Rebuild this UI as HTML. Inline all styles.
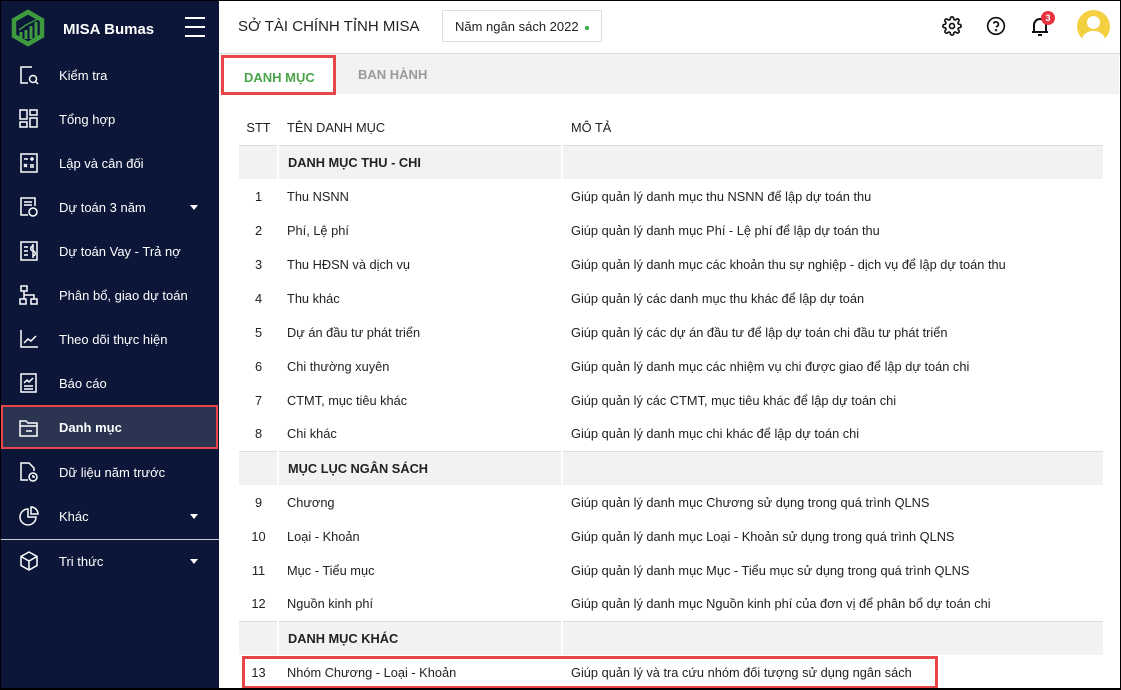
<!DOCTYPE html>
<html><head><meta charset="utf-8"><style>
*{box-sizing:border-box;margin:0;padding:0}
body{width:1121px;height:690px;overflow:hidden;font-family:"Liberation Sans",sans-serif;background:#fff;position:relative}
.frame{position:absolute;left:0;top:0;width:1121px;height:690px;border:1px solid #000;border-bottom-width:2px;pointer-events:none;z-index:10}
.side{position:absolute;left:0;top:0;width:219px;height:690px;background:#0b1638;color:#fff}
.logo{position:absolute;left:9px;top:9px}
.brand{position:absolute;left:63px;top:21px;font-weight:bold;font-size:15px}
.ham{position:absolute;left:185px;top:17px;width:20px}
.ham i{display:block;height:2px;background:#fff;margin-bottom:7px}
.mi{position:absolute;left:0;width:219px;height:44px;font-size:13px;display:flex;align-items:center}
.mi svg{position:absolute;left:19px;top:12px}
.mi span{position:absolute;left:59px}
.mi b.car{position:absolute;left:190px;top:20px;border:4px solid transparent;border-top:5px solid #fff;border-bottom:0}
.act{background:#2b3552;outline:2px solid #e9464a;outline-offset:-2px;left:1px;width:217px;font-weight:bold}
.sep{position:absolute;left:0;top:539px;width:219px;height:1px;background:#c8ccd6}
.hdr{position:absolute;left:219px;top:0;right:0;height:54px;border-bottom:1px solid #ddd}
.title{position:absolute;left:19px;top:18px;font-size:15px;color:#222}
.year{position:absolute;left:223px;top:10px;width:160px;height:32px;border:1px solid #ddd;font-size:13px;color:#222;padding:8px 12px}
.year i{display:inline-block;width:4px;height:4px;border-radius:50%;background:#2eaa3f;margin-left:6px;vertical-align:middle}
.tabs{position:absolute;left:219px;top:54px;right:2px;height:40px;background:#f2f2f2}
.t1{position:absolute;left:2px;top:1px;width:115px;height:40px;background:#fff;border:3px solid #e9464a;color:#4aa54a;font-weight:bold;font-size:13px;padding:12px 0 0 20px}
.t2{position:absolute;left:139px;top:13px;color:#9a9a9a;font-weight:bold;font-size:13px}
table{position:absolute;left:239px;top:110px;width:864px;border-collapse:collapse;font-size:12.8px;color:#222}
td{height:34px;padding:0;white-space:nowrap}
td:nth-child(1){width:39px;text-align:center}
td:nth-child(2){width:284px;padding-left:9px}
td:nth-child(3){padding-left:9px}
tr.h td{height:35px}
tr.g td{background:#f2f2f2;font-weight:bold;border-left:2px solid #fff}
tr.g td:first-child{border-left:0}
tr.g{border-top:1px solid #ddd}
.hl{position:absolute;left:242px;top:656px;width:696px;height:33px;border:3px solid #e9464a}
</style></head><body>
<div class="side">
<svg class="logo" width="38" height="38" viewBox="0 0 38 38"><path d="M19 3 L33 11 V27 L19 35 L5 27 V11 Z" fill="none" stroke="#3f9a3f" stroke-width="4.5"/><path d="M12 30V23M17 30V21M22 30V17M27 30V13" stroke="#3f9a3f" stroke-width="3"/><path d="M10 21 L17 16 L23 13 L29 10" stroke="#3f9a3f" stroke-width="1.5" fill="none"/></svg>
<div class="brand">MISA Bumas</div>
<div class="ham"><i></i><i></i><i></i></div>
<div class="mi" style="top:53px"><svg width="20" height="20" fill="none" stroke="#fff" stroke-width="1.5"><path d="M13 2H2V18H9"/><circle cx="14" cy="14" r="3.5"/><path d="M16.5 16.5L19 19"/></svg><span>Kiểm tra</span></div>
<div class="mi" style="top:97px"><svg width="20" height="20" fill="none" stroke="#fff" stroke-width="1.5"><rect x="1" y="1" width="7" height="9"/><rect x="11" y="1" width="7" height="5"/><rect x="1" y="13" width="7" height="5"/><rect x="11" y="9" width="7" height="9"/></svg><span>Tổng hợp</span></div>
<div class="mi" style="top:141px"><svg width="20" height="20" fill="none" stroke="#fff" stroke-width="1.5"><rect x="2" y="1" width="16" height="18"/><path d="M5 6h4M11 6h4M13 4v4M5 11l3 3M8 11l-3 3M11 12h4M11 14h4"/></svg><span>Lập và cân đối</span></div>
<div class="mi" style="top:185px"><svg width="20" height="20" fill="none" stroke="#fff" stroke-width="1.5"><path d="M9 18H2V1H16V9"/><path d="M5 5h8M5 8h8"/><circle cx="14" cy="15" r="4"/></svg><span>Dự toán 3 năm</span><b class="car"></b></div>
<div class="mi" style="top:229px"><svg width="20" height="20" fill="none" stroke="#fff" stroke-width="1.5"><rect x="2" y="1" width="16" height="18"/><path d="M5 6h4M5 10h4M5 14h4M14 5c-3 0-3 5 0 5s3 5 0 5M14 3v14"/></svg><span>Dự toán Vay - Trả nợ</span></div>
<div class="mi" style="top:273px"><svg width="20" height="20" fill="none" stroke="#fff" stroke-width="1.5"><rect x="2" y="1" width="6" height="5"/><rect x="1" y="14" width="6" height="5"/><rect x="12" y="14" width="6" height="5"/><path d="M5 6v4h10v4M5 10v4"/></svg><span>Phân bổ, giao dự toán</span></div>
<div class="mi" style="top:317px"><svg width="20" height="20" fill="none" stroke="#fff" stroke-width="1.5"><path d="M2 1V18H19M5 14l4-4 3 2 5-5"/></svg><span>Theo dõi thực hiện</span></div>
<div class="mi" style="top:361px"><svg width="20" height="20" fill="none" stroke="#fff" stroke-width="1.5"><rect x="2" y="1" width="15" height="18"/><path d="M5 10l3-3 2 2 4-4M5 13h9M5 16h9"/></svg><span>Báo cáo</span></div>
<div class="mi act" style="top:405px"><svg width="20" height="20" fill="none" stroke="#fff" stroke-width="1.5" style="left:18px;top:13px"><path d="M1 3h6l2 2h9v13H1z M1 8h17M7 13h6"/></svg><span style="left:58px">Danh mục</span></div>
<div class="mi" style="top:450px"><svg width="20" height="20" fill="none" stroke="#fff" stroke-width="1.5"><path d="M9 18H2V1H10L15 6V9"/><circle cx="14" cy="15" r="4"/><path d="M14 13v2h2"/></svg><span>Dữ liệu năm trước</span></div>
<div class="mi" style="top:494px"><svg width="20" height="20" fill="none" stroke="#fff" stroke-width="1.5"><path d="M9 3A8 8 0 1 0 17 11H9Z"/><path d="M12 1A7 7 0 0 1 19 8H12Z"/></svg><span>Khác</span><b class="car"></b></div>
<div class="sep"></div>
<div class="mi" style="top:539px"><svg width="20" height="20" fill="none" stroke="#fff" stroke-width="1.5"><path d="M10 1L18 5.5V14.5L10 19L2 14.5V5.5Z M2 5.5L10 10L18 5.5M10 10V19"/></svg><span>Tri thức</span><b class="car"></b></div>
</div>
<div class="hdr">
<div class="title">SỞ TÀI CHÍNH TỈNH MISA</div>
<div class="year">Năm ngân sách 2022<i></i></div>
<svg style="position:absolute;left:723px;top:16px" width="20" height="20" viewBox="0 0 24 24" fill="none" stroke="#111" stroke-width="2"><circle cx="12" cy="12" r="3"/><path d="M19.4 15a1.7 1.7 0 0 0 .3 1.8l.1.1a2 2 0 1 1-2.8 2.8l-.1-.1a1.7 1.7 0 0 0-1.8-.3 1.7 1.7 0 0 0-1 1.5V21a2 2 0 1 1-4 0v-.1a1.7 1.7 0 0 0-1.1-1.5 1.7 1.7 0 0 0-1.8.3l-.1.1a2 2 0 1 1-2.8-2.8l.1-.1a1.7 1.7 0 0 0 .3-1.8 1.7 1.7 0 0 0-1.5-1H3a2 2 0 1 1 0-4h.1a1.7 1.7 0 0 0 1.5-1.1 1.7 1.7 0 0 0-.3-1.8l-.1-.1a2 2 0 1 1 2.8-2.8l.1.1a1.7 1.7 0 0 0 1.8.3H9a1.7 1.7 0 0 0 1-1.5V3a2 2 0 1 1 4 0v.1a1.7 1.7 0 0 0 1 1.5 1.7 1.7 0 0 0 1.8-.3l.1-.1a2 2 0 1 1 2.8 2.8l-.1.1a1.7 1.7 0 0 0-.3 1.8V9a1.7 1.7 0 0 0 1.5 1H21a2 2 0 1 1 0 4h-.1a1.7 1.7 0 0 0-1.5 1z"/></svg>
<svg style="position:absolute;left:767px;top:16px" width="20" height="20" viewBox="0 0 24 24" fill="none" stroke="#111" stroke-width="2"><circle cx="12" cy="12" r="10"/><path d="M9.1 9a3 3 0 0 1 5.8 1c0 2-3 3-3 3"/><circle cx="12" cy="17" r=".5"/></svg>
<svg style="position:absolute;left:811px;top:16px" width="20" height="21" viewBox="0 0 20 21" fill="none" stroke="#111" stroke-width="2"><path d="M4 16V9a6 6 0 0 1 12 0v7H2h16M8 19h4"/></svg>
<div style="position:absolute;left:822px;top:11px;width:14px;height:14px;border-radius:50%;background:#e9333f;color:#fff;font-size:9px;font-weight:bold;text-align:center;line-height:14px">3</div>
<div style="position:absolute;left:858px;top:10px;width:33px;height:33px;border-radius:50%;background:#f3d040;overflow:hidden"><div style="position:absolute;left:10px;top:6px;width:13px;height:13px;border-radius:50%;background:#fff"></div><div style="position:absolute;left:5px;top:21px;width:23px;height:18px;border-radius:50%;background:#fff"></div></div>
</div>
<div class="tabs"><div class="t1">DANH MỤC</div><div class="t2">BAN HÀNH</div></div>
<table>
<tr class="h"><td>STT</td><td>TÊN DANH MỤC</td><td>MÔ TẢ</td></tr>
<tr class="g"><td></td><td>DANH MỤC THU - CHI</td><td></td></tr>
<tr><td>1</td><td>Thu NSNN</td><td>Giúp quản lý danh mục thu NSNN để lập dự toán thu</td></tr>
<tr><td>2</td><td>Phí, Lệ phí</td><td>Giúp quản lý danh mục Phí - Lệ phí để lập dự toán thu</td></tr>
<tr><td>3</td><td>Thu HĐSN và dịch vụ</td><td>Giúp quản lý danh mục các khoản thu sự nghiệp - dịch vụ để lập dự toán thu</td></tr>
<tr><td>4</td><td>Thu khác</td><td>Giúp quản lý các danh mục thu khác để lập dự toán</td></tr>
<tr><td>5</td><td>Dự án đầu tư phát triển</td><td>Giúp quản lý các dự án đầu tư để lập dự toán chi đầu tư phát triển</td></tr>
<tr><td>6</td><td>Chi thường xuyên</td><td>Giúp quản lý danh mục các nhiệm vụ chi được giao để lập dự toán chi</td></tr>
<tr><td>7</td><td>CTMT, mục tiêu khác</td><td>Giúp quản lý các CTMT, mục tiêu khác để lập dự toán chi</td></tr>
<tr><td>8</td><td>Chi khác</td><td>Giúp quản lý danh mục chi khác để lập dự toán chi</td></tr>
<tr class="g"><td></td><td>MỤC LỤC NGÂN SÁCH</td><td></td></tr>
<tr><td>9</td><td>Chương</td><td>Giúp quản lý danh mục Chương sử dụng trong quá trình QLNS</td></tr>
<tr><td>10</td><td>Loại - Khoản</td><td>Giúp quản lý danh mục Loại - Khoản sử dụng trong quá trình QLNS</td></tr>
<tr><td>11</td><td>Mục - Tiểu mục</td><td>Giúp quản lý danh mục Mục - Tiểu mục sử dụng trong quá trình QLNS</td></tr>
<tr><td>12</td><td>Nguồn kinh phí</td><td>Giúp quản lý danh mục Nguồn kinh phí của đơn vị để phân bổ dự toán chi</td></tr>
<tr class="g"><td></td><td>DANH MỤC KHÁC</td><td></td></tr>
<tr><td>13</td><td>Nhóm Chương - Loại - Khoản</td><td>Giúp quản lý và tra cứu nhóm đối tượng sử dụng ngân sách</td></tr>
</table>
<div class="hl"></div>
<div class="frame"></div>
</body></html>
